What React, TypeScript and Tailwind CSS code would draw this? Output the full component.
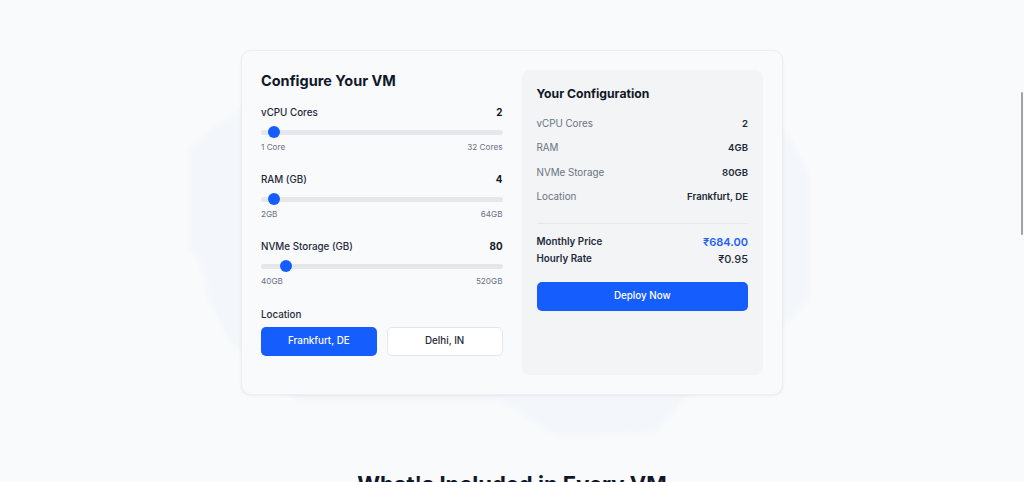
import { useState } from "react";

type Slider = {
  key: string;
  label: string;
  min: number;
  max: number;
  value: number;
  minLabel: string;
  maxLabel: string;
};

const sliders: Slider[] = [
  { key: "cpu", label: "vCPU Cores", min: 1, max: 32, value: 2, minLabel: "1 Core", maxLabel: "32 Cores" },
  { key: "ram", label: "RAM (GB)", min: 2, max: 64, value: 4, minLabel: "2GB", maxLabel: "64GB" },
  { key: "disk", label: "NVMe Storage (GB)", min: 40, max: 520, value: 80, minLabel: "40GB", maxLabel: "520GB" },
];

const locations = ["Frankfurt, DE", "Delhi, IN"];

function RangeRow({ s }: { s: Slider }) {
  const pct = (s.value - s.min) / (s.max - s.min);
  return (
    <div>
      <div className="flex h-4 items-center justify-between text-[9.8px] leading-4">
        <span className="font-medium text-gray-800">{s.label}</span>
        <span className="font-bold text-gray-900">{s.value}</span>
      </div>
      <div className="relative mt-[5px] flex h-3 items-center">
        <div className="h-[5px] w-full rounded-full bg-gray-200" />
        <div
          className="absolute top-0 h-3 w-3 rounded-full bg-[#155dfc]"
          style={{ left: `calc(${pct} * (100% - 12px))` }}
        />
      </div>
      <div className="mt-[3px] flex h-3 items-center justify-between text-[8.2px] leading-3 text-gray-500">
        <span>{s.minLabel}</span>
        <span>{s.maxLabel}</span>
      </div>
    </div>
  );
}

function SummaryRow({ label, value }: { label: string; value: string }) {
  return (
    <div className="flex h-[24.4px] items-center justify-between text-[9.8px]">
      <span className="text-gray-500">{label}</span>
      <span className="text-[9.6px] font-semibold text-gray-800">{value}</span>
    </div>
  );
}

export default function App() {
  const [location, setLocation] = useState(locations[0]);

  return (
    <div
      className="relative h-screen overflow-hidden bg-[#f8fafc]"
      style={{ fontFamily: "Inter, 'Noto Sans', sans-serif" }}
    >
      <svg
        className="pointer-events-none absolute left-0 top-0 blur-[2px]"
        width="1024"
        height="482"
        viewBox="0 0 1024 482"
      >
        <polygon
          fill="#f3f6fa"
          points="215,128 255,100 300,85 700,85 745,100 790,140 808,175 808,300 790,320 770,330 700,380 655,432 560,436 500,400 300,400 270,380 230,340 210,300 200,260 190,250 190,150"
        />
      </svg>

      <div className="relative pt-[50px]">
        <div className="mx-auto grid w-[542px] grid-cols-2 gap-[19px] rounded-[10px] border border-[#eceef1] bg-[#f9fafc] p-[19px] shadow-[0_1px_3px_rgba(15,23,42,0.06)]">
          <div>
            <h2 className="h-5 pt-px text-[14.5px] font-bold leading-5 text-gray-900">Configure Your VM</h2>
            <div className="mt-[15px] flex flex-col gap-[19px]">
              {sliders.map((s) => (
                <RangeRow key={s.key} s={s} />
              ))}
            </div>
            <div className="mt-5 h-4 text-[9.8px] font-medium leading-4 text-gray-800">Location</div>
            <div className="mt-[4px] grid grid-cols-2 gap-[10px]">
              {locations.map((loc) =>
                loc === location ? (
                  <button
                    key={loc}
                    onClick={() => setLocation(loc)}
                    className="h-[29px] rounded-[5px] bg-[#155dfc] text-[9.8px] font-medium text-white"
                  >
                    {loc}
                  </button>
                ) : (
                  <button
                    key={loc}
                    onClick={() => setLocation(loc)}
                    className="h-[29px] rounded-[5px] border border-gray-200 bg-white text-[9.8px] font-medium text-gray-800"
                  >
                    {loc}
                  </button>
                ),
              )}
            </div>
          </div>

          <div className="h-[305px] rounded-[8px] bg-[#f3f4f6] px-[15px] pt-[14px]">
            <h3 className="h-5 text-[12.2px] font-bold leading-5 text-gray-900">Your Configuration</h3>
            <div className="mt-2">
              <SummaryRow label="vCPU Cores" value="2" />
              <SummaryRow label="RAM" value="4GB" />
              <SummaryRow label="NVMe Storage" value="80GB" />
              <SummaryRow label="Location" value={location} />
            </div>
            <div className="mt-[13px] border-t border-gray-200" />
            <div className="mt-[10px]">
              <div className="flex h-[17px] items-center justify-between">
                <span className="text-[9.8px] font-semibold text-gray-800">Monthly Price</span>
                <span className="text-[11px] font-semibold text-[#1f63f5]">₹684.00</span>
              </div>
              <div className="flex h-[17px] items-center justify-between">
                <span className="text-[9.8px] font-semibold text-gray-800">Hourly Rate</span>
                <span className="text-[11px] font-medium text-gray-800">₹0.95</span>
              </div>
            </div>
            <button className="mt-[14px] h-[29px] w-full rounded-[5px] bg-[#155dfc] text-[9.8px] font-medium text-white">
              Deploy Now
            </button>
          </div>
        </div>

        <h2 className="mt-[73px] text-center text-[22px] font-bold leading-8 text-gray-900">
          What's Included in Every VM
        </h2>
      </div>

      <div className="absolute right-[1px] top-[92px] h-[143px] w-[2px] rounded-full bg-[#a3a3a3]" />
    </div>
  );
}
